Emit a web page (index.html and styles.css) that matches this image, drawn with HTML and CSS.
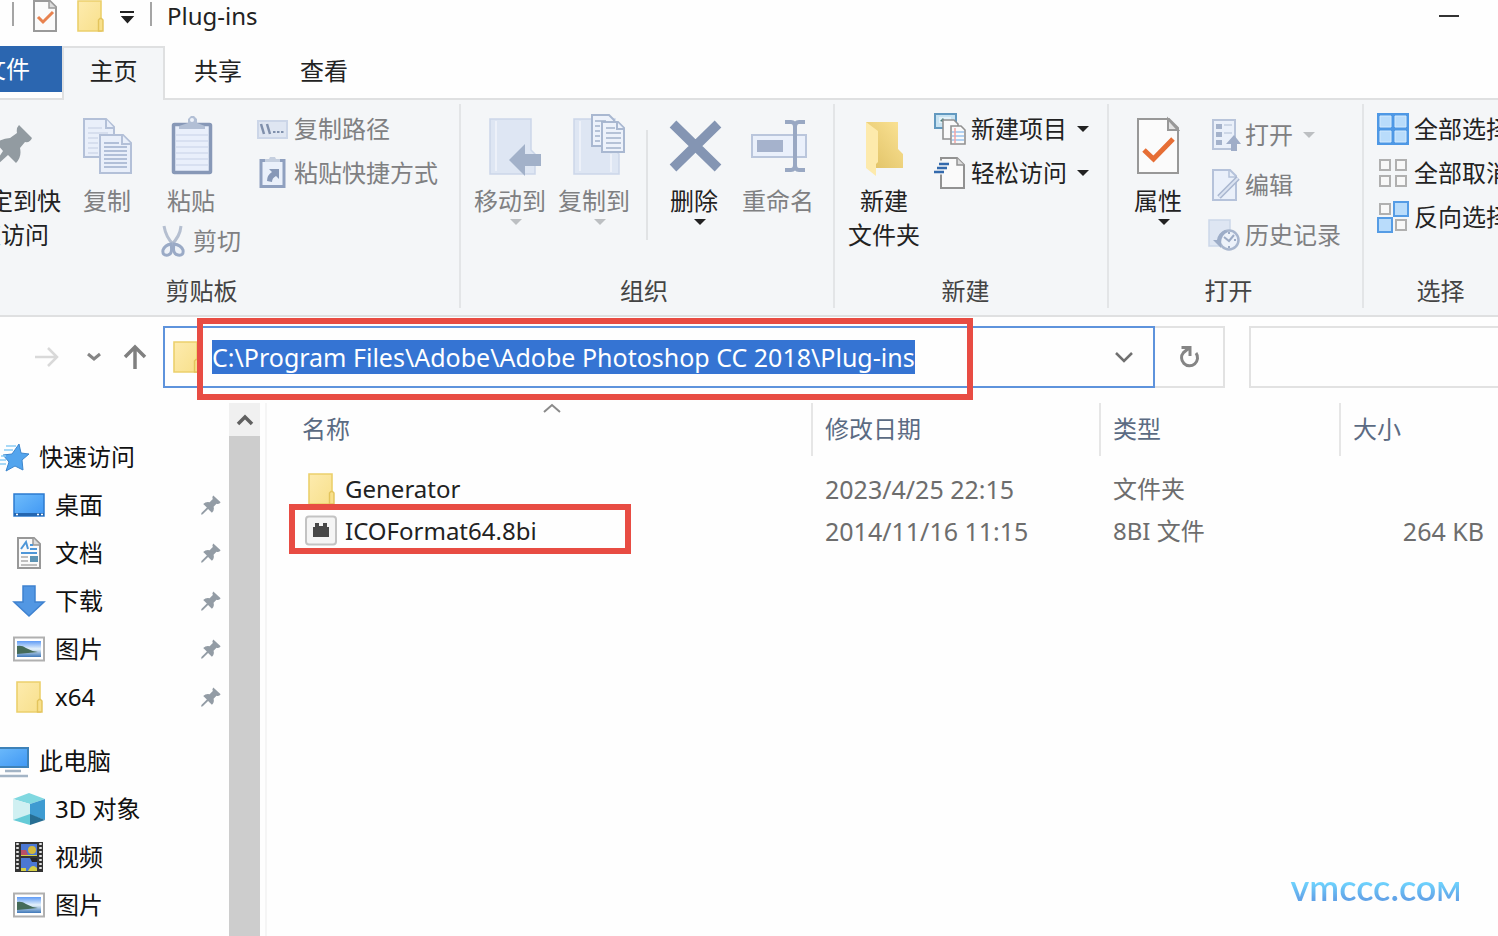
FILE: index.html
```html
<!DOCTYPE html>
<html lang="zh-CN">
<head>
    <meta charset="UTF-8">
    <meta name="viewport" content="width=device-width, initial-scale=1.0">
    <title>Plug-ins</title>
    <link rel="stylesheet" href="styles.css">
</head>
<body>
    <!-- Shared icons -->
    <svg class="sprite" aria-hidden="true">
        <defs>
            <linearGradient id="gold" x1="0" y1="0" x2="1" y2="1">
                <stop offset="0" stop-color="#fdebae"/>
                <stop offset="1" stop-color="#f8e08c"/>
            </linearGradient>
            <linearGradient id="goldDark" x1="0" y1="1" x2="1" y2="0">
                <stop offset="0" stop-color="#dfc063"/>
                <stop offset="1" stop-color="#fbe396"/>
            </linearGradient>
            <linearGradient id="sky" x1="0" y1="0" x2="1" y2="1">
                <stop offset="0" stop-color="#6fbcfb"/>
                <stop offset="1" stop-color="#3f97f4"/>
            </linearGradient>
            <linearGradient id="photoSky" x1="0" y1="0" x2="0" y2="1">
                <stop offset="0" stop-color="#5f9bf5"/>
                <stop offset="0.5" stop-color="#e6f2fb"/>
                <stop offset="1" stop-color="#3f78b8"/>
            </linearGradient>
        </defs>
        <symbol id="folder" viewBox="0 0 32 32">
            <path d="M4 1h23v30H4z" fill="url(#gold)" stroke="#ecd06c" stroke-width="1.6"/>
            <path d="M24.5 31V20l1.5-1.5h1.500L29 20v11z" fill="#f8e08c" stroke="#e3c45c" stroke-width="1.4"/>
        </symbol>
        <symbol id="pin" viewBox="0 0 24 24">
            <path d="M14.500 1.500 L22.500 9 Q21 11.500 18 10.500 L14.800 14 Q16 18 13 20.500 L8.800 16.300 L3 22 L1.300 22.500 L1.500 20.800 L7.500 14.800 L3.500 11 Q6.500 8 10.500 9 L14 5.500 Q12.800 3.500 14.500 1.500z" fill="#939ca5"/>
        </symbol>
        <symbol id="photo" viewBox="0 0 32 32">
            <path d="M1 4.500h30v23H1z" fill="#fff" stroke="#b0b0b0" stroke-width="2"/>
            <path d="M4 8h24v16H4z" fill="url(#photoSky)"/>
            <path d="M4 13 Q9 12 13 15 Q18 18 25 19 L15 20 L4 21z" fill="#456b58"/>
        </symbol>
        <symbol id="down" viewBox="0 0 12 8">
            <path d="M0 1h12L6 7z" fill="currentColor"/>
        </symbol>
        <symbol id="checked-page" viewBox="0 0 44 60">
            <path d="M2 3h31l9 9v45H2z" fill="#fbfbfb" stroke="#989898" stroke-width="2"/>
            <path d="M32 3v11h10z" fill="#e2e2e2" stroke="#989898" stroke-width="2"/>
            <path d="M8 34l9.500 9L37 23" fill="none" stroke="#e66e35" stroke-width="5"/>
        </symbol>
    </svg>

    <header class="titlebar">
        <span class="bar"></span>
        <button class="plain" aria-label="属性"><svg class="icon" viewBox="0 0 32 32"><path d="M5 1h16l6 6v24H5z" fill="#fbfbfb" stroke="#9a9a9a" stroke-width="2"/><path d="M20 1v7h7" fill="#ddd" stroke="#9a9a9a" stroke-width="1.500"/><path d="M9 17l5 5 10-10" fill="none" stroke="#e8824f" stroke-width="3"/></svg></button>
        <button class="plain" aria-label="新建文件夹"><svg class="icon"><use href="#folder"/></svg></button>
        <button class="plain" aria-label="自定义"><svg width="16" height="16" viewBox="0 0 16 16"><path d="M1 4h14M4 9h9l-4.500 5z" fill="#222" stroke="#222" stroke-width="2"/></svg></button>
        <span class="bar"></span>
        <h1 class="title">Plug-ins</h1>
        <button class="plain minimize" aria-label="最小化"><svg width="20" height="2"><path d="M0 0h20v2H0z" fill="#333"/></svg></button>
    </header>

    <nav class="tabs">
        <button class="tab file">文件</button>
        <button class="tab active">主页</button>
        <button class="tab">共享</button>
        <button class="tab">查看</button>
    </nav>

    <div class="ribbon">
        <section class="group clipboard">
            <div class="group-body">
                <button class="big pin">
                    <svg width="42" height="60" viewBox="0 0 42 60"><path d="M27 9L40 22Q38 27 33 26L28 32Q30 41 24 47L16 39L5 49L3 49L3 47L11 35L4 27Q11 22 18 22L25 17Q24 12 27 9z" fill="#929ba1"/></svg>
                    <span>固定到快<br>速访问</span>
                </button>
                <button class="big copy" disabled>
                    <svg width="50" height="60" viewBox="0 0 50 60">
                        <g fill="#e9effa" stroke="#b3c0d8" stroke-width="2">
                            <path d="M2 3h22l8 8v30H2z"/><path d="M24 3v9h8"/>
                            <path d="M18 19h23l8 8v30H18z"/><path d="M40 19v9h9"/>
                        </g>
                        <path d="M6 12h14M6 17h20M6 22h10M6 27h10M6 32h10M6 37h10" stroke="#cfd9ea" stroke-width="1.500"/>
                        <path d="M22 27h15M22 31h23M22 35h23M22 39h23M22 43h23M22 47h23M22 51h23" stroke="#9fb0cd" stroke-width="1.500"/>
                    </svg>
                    <span>复制</span>
                </button>
                <div class="paste-column">
                    <button class="big paste" disabled>
                        <svg width="44" height="60" viewBox="0 0 44 60">
                            <rect x="4.500" y="8.500" width="37" height="48" rx="1" fill="#e9effb" stroke="#8798b7" stroke-width="3.500"/>
                            <path d="M7 19h32M7 25h32M7 31h32M7 37h32M7 43h32M7 49h32" stroke="#d2dcee" stroke-width="1.500"/>
                            <path d="M10 13v-3l9-3V3l3-3h3l3 3v4l8 3v3z" fill="#b2bfd5"/><circle cx="23" cy="4" r="2" fill="#eef2f9"/>
                        </svg>
                        <span>粘贴</span>
                    </button>
                    <button class="small cut" disabled>
                        <svg width="24" height="32" viewBox="0 0 24 32">
                            <path d="M3 1Q5 13 13 20M20 1Q19 12 10 20" fill="none" stroke="#b5bfd0" stroke-width="3"/>
                            <g fill="#eef2f8" stroke="#9aaac6" stroke-width="3"><path d="M10 19Q12 29 7 30Q1 31 2 25Q4 20 10 19z"/><path d="M13 19Q11 29 17 30Q23 31 22 25Q20 20 13 19z"/></g>
                        </svg>
                        <span>剪切</span>
                    </button>
                </div>
                <div class="small-list">
                    <button class="small" disabled>
                        <svg class="icon" viewBox="0 0 32 32"><path d="M1 8h29v17H1z" fill="#dfe6f2" stroke="#ccd6e8" stroke-width="2"/><path d="M4 11l3 10M10 11l3 10" stroke="#8090ac" stroke-width="2.500"/><path d="M16 19h2.500M20 19h2.500M24 19h2.500" stroke="#8090ac" stroke-width="2"/></svg>
                        <span>复制路径</span>
                    </button>
                    <button class="small" disabled>
                        <svg class="icon" viewBox="0 0 32 32"><rect x="4" y="3.500" width="23" height="26" fill="#eaf0fa" stroke="#8fa0bf" stroke-width="3"/><path d="M8 5V2h4l1-2h5l1 2h4v3z" fill="#c5cfdf"/><path d="M12 12h10v10l-3-3q-4 2-4 6l-5-1q0-6 5-9z" fill="#8798b7"/></svg>
                        <span>粘贴快捷方式</span>
                    </button>
                </div>
            </div>
            <h2 class="group-title">剪贴板</h2>
        </section>

        <section class="group organize">
            <div class="group-body">
                <button class="big" disabled>
                    <svg width="56" height="60" viewBox="0 0 56 60"><path d="M8 3h41v31l4 4v20H8z" fill="#dee6f3" stroke="#cbd6e9" stroke-width="1.500"/><path d="M14 5v50" stroke="#edf1f9" stroke-width="2"/><path d="M27 44l16-16v10h16v12H43v10z" fill="#a2b1c9"/></svg>
                    <span>移动到</span>
                    <svg class="arrow"><use href="#down"/></svg>
                </button>
                <button class="big" disabled>
                    <svg width="56" height="60" viewBox="0 0 56 60">
                        <path d="M8 3h41v31l4 4v20H8z" fill="#dee6f3" stroke="#cbd6e9" stroke-width="1.500"/><path d="M14 5v50M45 56V38" stroke="#edf1f9" stroke-width="2"/>
                        <g fill="#edf2fb" stroke="#a9b8d1" stroke-width="2"><path d="M26-1h17l5 5v26H26z"/><path d="M36 6h16l6 6v24H36z"/><path d="M51 6v7h7"/></g>
                        <path d="M29 5h11M29 10h5M29 15h5M29 20h5M29 25h5M40 12h9M40 17h15M40 22h15M40 27h15M40 32h15" stroke="#a3b3cc" stroke-width="1.500"/>
                    </svg>
                    <span>复制到</span>
                    <svg class="arrow"><use href="#down"/></svg>
                </button>
                <span class="divider"></span>
                <button class="big">
                    <svg width="56" height="60" viewBox="0 0 56 60"><path d="M7 8l45 44M52 8L7 52" stroke="#8495b3" stroke-width="9.500"/></svg>
                    <span>删除</span>
                    <svg class="arrow"><use href="#down"/></svg>
                </button>
                <button class="big" disabled>
                    <svg width="58" height="60" viewBox="0 0 58 60"><path d="M3 19h54v22H3z" fill="#eaf0fb" stroke="#bac6dc" stroke-width="2"/><path d="M8 24h26v12H8z" fill="#a5b2cc"/><path d="M36 6h6q4 0 4 5v38q0 5-4 5h-6M56 6h-6q-4 0-4 5v38q0 5 4 5h6" fill="none" stroke="#99a8c3" stroke-width="4"/></svg>
                    <span>重命名</span>
                </button>
            </div>
            <h2 class="group-title">组织</h2>
        </section>

        <section class="group">
            <div class="group-body">
                <button class="big">
                    <svg width="44" height="60" viewBox="0 0 44 60"><path d="M4 6h32v27l5 5v14H4z" fill="url(#goldDark)"/><path d="M4 6l12 9v31l-2 2v12L4 52z" fill="#fdeaac"/></svg>
                    <span>新建<br>文件夹</span>
                </button>
                <div class="small-list">
                    <button class="small">
                        <svg class="icon" viewBox="0 0 32 32"><path d="M1 1h21v14H1z" fill="#c8e3f2" stroke="#6299c0" stroke-width="2"/><path d="M5 4h12v6H5z" fill="#e4f2f9"/><path d="M6 8l3-3 3 5z" fill="#487c7b"/><g fill="#fafafa" stroke="#919191" stroke-width="1.600"><path d="M9 7h11l4 4v15H9z"/><path d="M17 13h10l4 4v14H17z"/></g><path d="M18 19h12M18 23h12M18 27h12" stroke="#9bc3ee" stroke-width="1.500"/><path d="M21 15v15" stroke="#f2a4a4" stroke-width="1.500"/></svg>
                        <span>新建项目</span>
                        <svg class="arrow"><use href="#down"/></svg>
                    </button>
                    <button class="small">
                        <svg class="icon" viewBox="0 0 32 32"><path d="M7 1h16l7 7v23H7z" fill="#fafafa" stroke="#929292" stroke-width="2"/><path d="M23 1v7h7" fill="#ddd" stroke="#929292" stroke-width="1.500"/><path d="M4 6h11M2 10.500h11M0 15h10" stroke="#f4f6f7" stroke-width="5"/><path d="M5 7h10M3 11h10M0 15h10" stroke="#336aad" stroke-width="2.500"/></svg>
                        <span>轻松访问</span>
                        <svg class="arrow"><use href="#down"/></svg>
                    </button>
                </div>
            </div>
            <h2 class="group-title">新建</h2>
        </section>

        <section class="group open">
            <div class="group-body">
                <button class="big">
                    <svg width="44" height="60"><use href="#checked-page"/></svg>
                    <span>属性</span>
                    <svg class="arrow"><use href="#down"/></svg>
                </button>
                <div class="small-list open-list">
                    <button class="small" disabled>
                        <svg class="icon" viewBox="0 0 32 32"><path d="M5 1h22v29H5z" fill="#eaf0fa" stroke="#b8c4da" stroke-width="2"/><path d="M8 5h6v5H8zM8 13h6v5H8zM8 21h6v5H8z" fill="#a4b2cb"/><path d="M16 6h8M16 14h8" stroke="#cdd7e7" stroke-width="2"/><path d="M18 25l8-9 7 9h-4v7h-6v-7z" fill="#9fadc8"/></svg>
                        <span>打开</span>
                        <svg class="arrow"><use href="#down"/></svg>
                    </button>
                    <button class="small" disabled>
                        <svg class="icon" viewBox="0 0 32 32"><path d="M5 1h17l6 6v24H5z" fill="#eaf0fa" stroke="#b5c2da" stroke-width="2"/><path d="M21 1v7h7" fill="none" stroke="#b5c2da" stroke-width="1.500"/><path d="M11 28L30 9" stroke="#a8b6cf" stroke-width="5"/><path d="M11 28L30 9" stroke="#dbe3f1" stroke-width="2"/></svg>
                        <span>编辑</span>
                    </button>
                    <button class="small" disabled>
                        <svg class="icon" viewBox="0 0 32 32"><path d="M1 1h21v26H1z" fill="#dee6f3" stroke="#ccd7e9" stroke-width="1.500"/><circle cx="21" cy="21" r="9.500" fill="#edf2fa" stroke="#a8b6ce" stroke-width="2.500"/><path d="M21 13v2M21 27v2M28 21h-2M16 18l5 4 5-6" fill="none" stroke="#9dacc6" stroke-width="2"/><path d="M5 21h4q1-7 8-10l3 2q-7 3-7 11v5z" fill="#9dadc8"/></svg>
                        <span>历史记录</span>
                    </button>
                </div>
            </div>
            <h2 class="group-title">打开</h2>
        </section>

        <section class="group">
            <div class="group-body">
                <div class="small-list select-list">
                    <button class="small">
                        <svg class="icon" viewBox="0 0 32 32"><path d="M0 0h32v32H0z" fill="#4e98e5"/><path d="M3 3h11v11H3zM18 3h11v11H18zM3 18h11v11H3zM18 18h11v11H18z" fill="#b9dcfb" stroke="#d3eafd" stroke-width="1"/></svg>
                        <span>全部选择</span>
                    </button>
                    <button class="small">
                        <svg class="icon" viewBox="0 0 32 32"><path d="M3 3h10v10H3zM19 3h10v10H19zM3 19h10v10H3zM19 19h10v10H19z" fill="#f8f8f8" stroke="#b0b0b0" stroke-width="2"/></svg>
                        <span>全部取消</span>
                    </button>
                    <button class="small">
                        <svg class="icon" viewBox="0 0 32 32"><path d="M3 3h10v10H3zM19 19h10v10H19z" fill="#f8f8f8" stroke="#b0b0b0" stroke-width="2"/><path d="M17 1h14v14H17zM1 17h14v14H1z" fill="#b9dcfb" stroke="#559ce5" stroke-width="2"/></svg>
                        <span>反向选择</span>
                    </button>
                </div>
            </div>
            <h2 class="group-title">选择</h2>
        </section>
    </div>

    <div class="address-row">
        <button class="nav-button" aria-label="前进"><svg width="26" height="22" viewBox="0 0 26 22"><path d="M1 11h22M14 2l9 9-9 9" fill="none" stroke="#d9d9d9" stroke-width="2.500"/></svg></button>
        <button class="nav-button recent" aria-label="最近浏览的位置"><svg width="14" height="10" viewBox="0 0 14 10"><path d="M1 2l6 5 6-5" fill="none" stroke="#858585" stroke-width="3"/></svg></button>
        <button class="nav-button up" aria-label="上一级"><svg width="24" height="26" viewBox="0 0 24 26"><path d="M12 25V3M2 13L12 3l10 10" fill="none" stroke="#808080" stroke-width="3.500"/></svg></button>
        <div class="path">
            <svg class="icon"><use href="#folder"/></svg>
            <input class="path-input" id="path" type="text" aria-label="地址" spellcheck="false" value="C:\Program Files\Adobe\Adobe Photoshop CC 2018\Plug-ins">
            <button class="plain" aria-label="展开"><svg width="18" height="12" viewBox="0 0 18 12"><path d="M1 2l8 8 8-8" fill="none" stroke="#707070" stroke-width="2.500"/></svg></button>
            <span class="mark path-mark"></span>
        </div>
        <button class="refresh" aria-label="刷新"><svg width="22" height="24" viewBox="0 0 22 24"><path d="M5.500 7.500A8 8 0 1 0 18 8M3.500 2.500h8.500v8.500M11 3L5 8" fill="none" stroke="#858585" stroke-width="3"/></svg></button>
        <input class="search" type="search" aria-label="搜索">
    </div>

    <main class="main">
        <aside class="sidebar">
            <ul class="tree">
                <li class="node root"><svg class="icon" viewBox="0 0 32 32"><path d="M22 3l2 9 8 1-7 6 1 10-8-4-9 5 3-9-6-7 9-1z" fill="#53a5ee" stroke="#3d86cd"/><path d="M9 5h10M7 9h9M4 15h5M3 19h6M3 23h6" stroke="#8ccdf5" stroke-width="1.500"/></svg><span>快速访问</span></li>
                <li class="node"><svg class="icon" viewBox="0 0 32 32"><path d="M1 5h30v22H1z" fill="url(#sky)" stroke="#2d7bd0" stroke-width="1.500"/><path d="M1 24h30v3H1z" fill="#2466b0"/><path d="M3 25.500h2M24 25.500h2M28 25.500h2" stroke="#fff" stroke-width="1.500"/></svg><span>桌面</span><svg class="pinned"><use href="#pin"/></svg></li>
                <li class="node"><svg class="icon" viewBox="0 0 32 32"><path d="M5 1h16l6 6v24H5z" fill="#fafafa" stroke="#989898" stroke-width="2"/><path d="M20 1v7h7" fill="#ddd" stroke="#989898" stroke-width="1.500"/><path d="M8 12l5-7 2 7M17 8h3M17 12h7M8 16h16" fill="none" stroke="#4d96d8" stroke-width="2"/><path d="M8 20h7M8 24h7M8 28h16" stroke="#aaa" stroke-width="1.500"/><path d="M17 19h8v6h-8z" fill="#5d94b4"/></svg><span>文档</span><svg class="pinned"><use href="#pin"/></svg></li>
                <li class="node"><svg class="icon" viewBox="0 0 32 32"><path d="M10 1h12v16h9L16 31 1 17h9z" fill="#5297e3" stroke="#3f82d0" stroke-width="1.500"/></svg><span>下载</span><svg class="pinned"><use href="#pin"/></svg></li>
                <li class="node"><svg class="icon"><use href="#photo"/></svg><span>图片</span><svg class="pinned"><use href="#pin"/></svg></li>
                <li class="node"><svg class="icon"><use href="#folder"/></svg><span>x64</span><svg class="pinned"><use href="#pin"/></svg></li>
            </ul>
            <ul class="tree">
                <li class="node root"><svg class="icon" viewBox="0 0 32 32"><path d="M-3 3h34v19H-3z" fill="url(#sky)" stroke="#3e82b8" stroke-width="2"/><path d="M8 26h16M3 31h28" stroke="#a3b4c5" stroke-width="2.500"/></svg><span>此电脑</span></li>
                <li class="node"><svg class="icon" viewBox="0 0 32 32"><path d="M0 6L16 0l16 6-15 5z" fill="#80d8e0"/><path d="M0 6l17 5v11L0 27z" fill="#d0f0f2"/><path d="M32 6l-15 5v11l15 5z" fill="#3e9bd1"/><path d="M0 27l17-6v11z" fill="#65cbd7"/><path d="M32 27l-15-6v11z" fill="#276e93"/></svg><span>3D 对象</span></li>
                <li class="node"><svg class="icon" viewBox="0 0 32 32"><path d="M2 1h28v30H2z" fill="#343434"/><path d="M4.500 2v28M27.500 2v28" stroke="#e4e4e4" stroke-width="2.500" stroke-dasharray="2 2"/><path d="M8 3h16v12H8zM8 17h16v13H8z" fill="#4b78d4"/><path d="M8 9h5l2 5H8z" fill="#b84f68"/><circle cx="19" cy="9" r="4" fill="#d4b83c"/><path d="M17 17h7v4h-5z" fill="#26262c"/><path d="M8 14h16v1H8zM15 30q4-8 9-3v3zM8 27h5v3H8z" fill="#d4cf45"/></svg><span>视频</span></li>
                <li class="node"><svg class="icon"><use href="#photo"/></svg><span>图片</span></li>
            </ul>
        </aside>
        <div class="scrollbar">
            <button class="scroll-up" aria-label="向上滚动"><svg width="18" height="14" viewBox="0 0 18 14"><path d="M2 11l7-7 7 7" fill="none" stroke="#606060" stroke-width="3.500"/></svg></button>
            <div class="thumb"></div>
        </div>
        <div class="content">
            <table class="files">
                <thead>
                    <tr>
                        <th class="name">名称<svg class="sort" width="18" height="10" viewBox="0 0 18 10"><path d="M1 9l8-7 8 7" fill="none" stroke="#8a8a8a" stroke-width="2"/></svg></th>
                        <th class="date">修改日期</th>
                        <th class="type">类型</th>
                        <th class="size">大小</th>
                    </tr>
                </thead>
                <tbody>
                    <tr>
                        <td><div class="file-name"><svg class="icon"><use href="#folder"/></svg>Generator</div></td>
                        <td class="number">2023/4/25 22:15</td>
                        <td>文件夹</td>
                        <td></td>
                    </tr>
                    <tr>
                        <td>
                            <div class="file-name"><svg class="icon" viewBox="0 0 32 32"><rect x="1" y="1.500" width="30" height="28" rx="3" fill="#f5f5f5" stroke="#c3c3c3" stroke-width="2"/><path d="M8 12h2V8h4v3h4V8h4v4h2v10H8z" fill="#484848"/></svg>ICOFormat64.8bi</div>
                            <span class="mark file-mark"></span>
                        </td>
                        <td class="number">2014/11/16 11:15</td>
                        <td>8BI 文件</td>
                        <td class="number kb">264 KB</td>
                    </tr>
                </tbody>
            </table>
        </div>
    </main>

    <div class="watermark">vmccc.co<span>M</span></div>

    <script>
        // Select the whole path, as after a click in the address bar
        const path = document.getElementById('path');
        path.focus();
        path.select();
    </script>
</body>
</html>
```

FILE: styles.css
```css
* {
    box-sizing: border-box;
}

body {
    display: flex;
    flex-direction: column;
    height: 100vh;
    margin: 0;
    overflow: hidden;
    background-color: #fefefe;
    color: #222;
    font-family: "Noto Sans", "Noto Sans CJK SC", sans-serif;
    font-size: 24px;
    line-height: 34px;
}

button,
input {
    padding: 0;
    border: none;
    background: none;
    color: inherit;
    font: inherit;
}

button {
    white-space: nowrap;
}

button:disabled {
    color: #7f8082;
}

svg {
    display: block;
    flex: none;
    overflow: visible;
}

.sprite {
    position: absolute;
    width: 0;
    height: 0;
}

.icon {
    width: 32px;
    height: 32px;
}

.arrow {
    width: 12px;
    height: 8px;
}

button:disabled .arrow {
    color: #bcbfc2;
}

/* Title bar */
.titlebar {
    display: flex;
    align-items: center;
    gap: 13px;
    height: 32px;
    margin-bottom: 14px;
    padding: 0 39px 0 10px;
}

.bar {
    width: 2px;
    height: 24px;
    margin: 0 2px 4px;
    background-color: #a5a5a5;
}

.title {
    margin: 0;
    font-size: 24px;
    font-weight: normal;
}

.minimize {
    margin-left: auto;
}

/* Tabs */
.tabs {
    display: flex;
    flex: none;
    height: 54px;
    border-bottom: 2px solid #dfe0e1;
}

.tab {
    width: 106px;
    height: 50px;
}

.tab.file {
    width: 112px;
    height: 46px;
    margin-left: -50px;
    background-color: #2b66b0;
    color: #fff;
}

.tab.active {
    width: 103px;
    height: 54px;
    padding-bottom: 6px;
    border: 2px solid #dfe0e1;
    border-bottom: none;
    background-color: #f4f6f8;
}

/* Ribbon */
.ribbon {
    display: flex;
    flex: none;
    padding: 4px 0 7px;
    border-bottom: 2px solid #dfe0e1;
    background-color: #f4f6f8;
}

.group {
    flex: none;
    padding: 0 18px 0 7px;
    border-right: 2px solid #e3e5e7;
}

.group.clipboard {
    margin-left: -56px;
    padding: 0 21px;
}

.group.organize {
    padding-right: 13px;
}

.group.open {
    padding-right: 21px;
}

.group-body {
    display: flex;
    min-height: 170px;
}

.clipboard .group-body {
    gap: 16px;
}

.group-title {
    margin: 0;
    color: #444;
    font-size: 24px;
    font-weight: normal;
    text-align: center;
}

.big {
    display: flex;
    flex-direction: column;
    align-items: center;
    width: 84px;
    padding-top: 12px;
}

.big span {
    margin-top: 8px;
}

.big .arrow {
    margin-left: 12px;
}

.big.pin {
    width: 96px;
}

.big.copy {
    width: 60px;
}

.big.paste {
    width: 60px;
}

.paste-column {
    display: flex;
    flex-direction: column;
    gap: 6px;
    margin-left: -4px;
    padding-left: 12px;
}

.small {
    display: flex;
    align-items: center;
    gap: 5px;
    height: 44px;
}

.small.cut {
    gap: 8px;
    height: 34px;
}

.small .arrow {
    margin-left: 5px;
}

.small-list {
    padding-top: 3px;
}

.big + .small-list {
    margin-left: 8px;
}

.open-list {
    padding-top: 6px;
}

.open-list .small {
    height: 50px;
}

.select-list {
    margin-left: 6px;
}

.divider {
    width: 2px;
    height: 110px;
    margin: 26px 4px 0 10px;
    background-color: #e1e3e5;
}

/* Address bar */
.address-row {
    display: flex;
    flex: none;
    height: 62px;
    margin: 9px 0 15px;
    padding-left: 27px;
}

.nav-button {
    display: flex;
    align-items: center;
    justify-content: center;
    width: 40px;
}

.recent {
    width: 54px;
}

.up {
    width: 28px;
}

.path {
    position: relative;
    display: flex;
    flex: 1;
    align-items: center;
    margin-left: 14px;
    padding: 0 20px 0 5px;
    border: 2px solid #5e93dc;
}

.path-input {
    flex: 1;
    min-width: 0;
    margin-left: 10px;
    outline: none;
    font-size: 25px;
}

.path-input::selection {
    background-color: #3574d3;
    color: #fff;
}

.refresh {
    display: flex;
    align-items: center;
    justify-content: center;
    width: 70px;
    border: 2px solid #e2e2e2;
    border-left: none;
}

.search {
    width: 249px;
    margin-left: 24px;
    padding: 0 12px;
    border: 2px solid #e2e2e2;
    border-right: none;
}

/* Red frames around the path and the plug-in file */
.mark {
    position: absolute;
    border: 6px solid #e84c43;
    pointer-events: none;
}

.path-mark {
    top: -10px;
    left: 32px;
    width: 776px;
    height: 82px;
}

.file-mark {
    top: -6px;
    left: -1px;
    width: 342px;
    height: 50px;
}

/* Sidebar */
.main {
    display: flex;
    flex: 1;
    min-height: 0;
}

.sidebar {
    width: 229px;
    padding-top: 30px;
    overflow: hidden;
    color: #111;
}

.tree {
    margin: 0 0 16px;
    padding: 0;
    list-style: none;
}

.node {
    display: flex;
    align-items: center;
    gap: 10px;
    height: 48px;
    padding: 0 7px 0 13px;
}

.node.root {
    margin-left: -16px;
}

.pinned {
    width: 22px;
    height: 22px;
    margin-left: auto;
}

.scrollbar {
    display: flex;
    flex-direction: column;
    width: 31px;
    background-color: #f0f0f0;
}

.scroll-up {
    display: flex;
    align-items: center;
    justify-content: center;
    height: 33px;
}

.thumb {
    flex: 1;
    background-color: #cdcdcd;
}

/* File list */
.content {
    flex: 1;
    margin-left: 5px;
    padding-left: 23px;
    border-left: 2px solid #f5f5f5;
}

.files {
    width: 100%;
    border-collapse: separate;
    border-spacing: 0;
    table-layout: fixed;
    color: #6d6d6d;
}

.files th {
    position: relative;
    height: 53px;
    padding: 0 0 2px 12px;
    border-right: 2px solid #e6e6e6;
    color: #5b6b83;
    font-weight: normal;
    text-align: left;
}

.files th:last-child {
    border-right: none;
}

.files tbody::before {
    display: block;
    height: 12px;
    content: "";
}

.files td {
    position: relative;
    height: 42px;
    padding: 0 0 0 12px;
}

.date {
    width: 288px;
}

.type {
    width: 240px;
}

.size {
    width: 157px;
}

.sort {
    position: absolute;
    top: 0;
    left: 50%;
    margin-left: -8px;
}

.file-name {
    display: flex;
    align-items: center;
    gap: 8px;
    padding-left: 3px;
    color: #222;
}

.files .number {
    font-size: 25px;
}

.files .kb {
    padding: 0 14px 0 0;
    text-align: right;
}

.watermark {
    position: absolute;
    right: 37px;
    bottom: 28px;
    background: linear-gradient(#6fd6ff 30%, #62a4e8 75%);
    background-clip: text;
    color: transparent;
    font-family: Lato, sans-serif;
    font-size: 36px;
    font-weight: 600;
}

.watermark span {
    font-size: 26px;
    font-weight: 700;
}
```
